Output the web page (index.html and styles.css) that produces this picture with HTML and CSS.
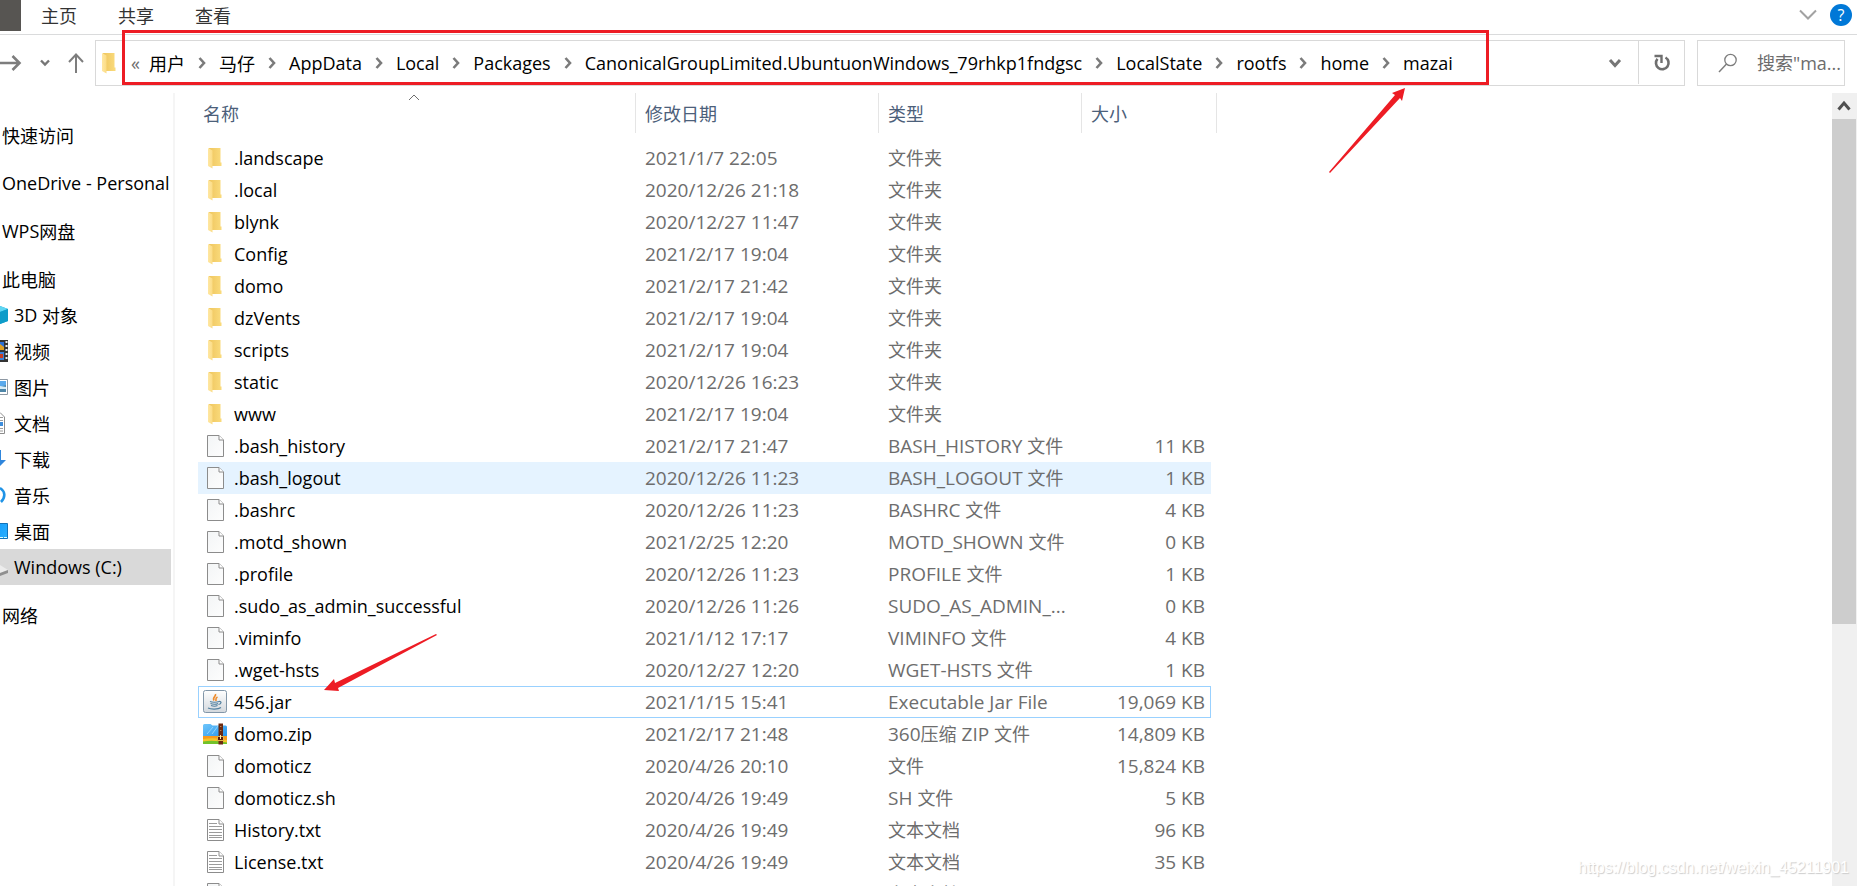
FILE: index.html
```html
<!DOCTYPE html>
<html lang="zh-CN">
<head>
<meta charset="utf-8">
<title>mazai</title>
<link rel="stylesheet" href="styles.css">
</head>
<body>
<svg class="sprite" aria-hidden="true">
  <defs>
    <linearGradient id="gFront" x1="0" y1="0" x2="1" y2="0"><stop offset="0" stop-color="#ffe7a2"/><stop offset="1" stop-color="#fbdc85"/></linearGradient>
    <linearGradient id="gBack" x1="0" y1="0" x2="1" y2="0"><stop offset="0" stop-color="#efc65f"/><stop offset="1" stop-color="#fadb7c"/></linearGradient>
    <linearGradient id="gPage" x1="0" y1="0" x2="1" y2="1"><stop offset="0" stop-color="#f3f5f6"/><stop offset="1" stop-color="#fdfdfd"/></linearGradient>
    <linearGradient id="gZip" x1="0" y1="0" x2="1" y2="1"><stop offset="0" stop-color="#6fc6fb"/><stop offset="1" stop-color="#2090ea"/></linearGradient>
    <linearGradient id="gJar" x1="0" y1="0" x2="0" y2="1"><stop offset="0" stop-color="#ffffff"/><stop offset="1" stop-color="#d3d8dd"/></linearGradient>
    <linearGradient id="gDesk" x1="0" y1="0" x2="1" y2="1"><stop offset="0" stop-color="#18a0fb"/><stop offset="1" stop-color="#2bb0ff"/></linearGradient>
  </defs>
  <symbol id="folder" viewBox="0 0 24 24">
    <path d="M6 2h11.500v14.500h1v3.500h-11z" fill="url(#gBack)"/>
    <path d="M5 2l4.500 2.500v18l-4.500-2.500z" fill="url(#gFront)"/>
  </symbol>
  <symbol id="file" viewBox="0 0 24 24">
    <path d="M4.500 1.500h11.500l4.500 4.500v16.500h-16z" fill="url(#gPage)" stroke="#8c8c8c"/>
    <path d="M16 1.500v4.500h4.500" fill="#fff" stroke="#8c8c8c"/>
  </symbol>
  <symbol id="text" viewBox="0 0 24 24">
    <path d="M4.500 1.500h11.500l4.500 4.500v16.500h-16z" fill="#fff" stroke="#8c8c8c"/>
    <path d="M16 1.500v4.500h4.500" fill="#fff" stroke="#8c8c8c"/>
    <path d="M6 5.500h8M6 8.500h13M6 11.500h13M6 14.500h13M6 17.500h13M6 19.500h13" stroke="#9b9b9b" fill="none"/>
  </symbol>
  <symbol id="jar" viewBox="0 0 24 24">
    <rect x=".5" y=".5" width="23" height="22" rx="2" fill="url(#gJar)" stroke="#8296a8"/>
    <path d="M12.500 4c1 2-3.500 3.500-1.500 6.500M14.500 7c-2.500 1.200-1.500 2.500-1.500 4" stroke="#ee8b2c" stroke-width="1.600" fill="none"/>
    <path d="M7 11.500c2 1 7 1 9 0M7.500 13.500c2 1 6 1 7.500 0M8 15.500c2 .8 5 .8 6.500 0M16 11.500c3-.5 2.500 2.500-.5 3M5 18c3 1.500 10 1.500 13-.5" stroke="#52809f" stroke-width="1.200" fill="none"/>
  </symbol>
  <symbol id="zip" viewBox="0 0 24 24">
    <path d="M0 3.500q0-1.500 1.500-1.500h6l2 1.500h13q1.500 0 1.500 1.500v12h-24z" fill="url(#gZip)"/>
    <path d="M4 12l6-7M9 12l6-8" stroke="#8dd4ff" stroke-width="1"/>
    <path d="M0 14h24v4h-24z" fill="#fa9a1c"/>
    <path d="M0 17q12-2 24 1v4h-24z" fill="#f7c52a"/>
    <path d="M0 19.500q10-2 24 1v1.500h-24z" fill="#72c22a"/>
    <path d="M15.500 1.500h4.500v21h-4.500z" fill="#6b2a10"/>
    <path d="M17.800 4v1M17.800 8v1" stroke="#d9a36e" stroke-width="1"/>
    <path d="M14.500 14.500h6v4h-6z" fill="#5a1d0a" stroke="#e2b64a"/>
    <path d="M17.500 13v4" stroke="#fff0b0"/>
  </symbol>
  <symbol id="crumb" viewBox="0 0 8 12"><path d="M1.500 1l4.500 5-4.500 5" fill="none" stroke="#7b7b7b" stroke-width="2.600"/></symbol>
  <symbol id="down" viewBox="0 0 14 10"><path d="M2 2l5 5.500 5-5.500" fill="none" stroke="#767676" stroke-width="3"/></symbol>
</svg>

<div class="window">
  <nav class="ribbon">
    <button class="file-tab" aria-label="文件"></button>
    <button class="tab">主页</button>
    <button class="tab">共享</button>
    <button class="tab">查看</button>
    <span class="spacer"></span>
    <button class="icon-btn" aria-label="展开功能区"><svg width="18" height="12" viewBox="0 0 18 12"><path d="M1 1.500l8 8 8-8" fill="none" stroke="#a2a2a2" stroke-width="2"/></svg></button>
    <button class="help" aria-label="帮助">?</button>
  </nav>

  <div class="toolbar">
    <div class="history">
      <button class="icon-btn" aria-label="前进"><svg width="22" height="18" viewBox="0 0 22 18"><path d="M0 9h20M12.500 2l7 7-7 7" fill="none" stroke="#7d7d7d" stroke-width="2.600"/></svg></button>
      <button class="icon-btn" aria-label="最近位置"><svg width="10" height="8" viewBox="0 0 10 8"><path d="M1 1.500l4 4 4-4" fill="none" stroke="#767676" stroke-width="2.400"/></svg></button>
      <button class="icon-btn" aria-label="向上"><svg width="16" height="20" viewBox="0 0 16 20"><path d="M8 20V2M1 9l7-7.500 7 7.500" fill="none" stroke="#7d7d7d" stroke-width="2"/></svg></button>
    </div>
    <div class="address">
      <svg class="icon"><use href="#folder"/></svg>
      <span class="overflow-mark">«</span>
      <ol class="crumbs">
        <li><a href="#" class="zh">用户</a></li>
        <li><svg class="sep"><use href="#crumb"/></svg><a href="#" class="zh">马仔</a></li>
        <li><svg class="sep"><use href="#crumb"/></svg><a href="#">AppData</a></li>
        <li><svg class="sep"><use href="#crumb"/></svg><a href="#">Local</a></li>
        <li><svg class="sep"><use href="#crumb"/></svg><a href="#">Packages</a></li>
        <li><svg class="sep"><use href="#crumb"/></svg><a href="#">CanonicalGroupLimited.UbuntuonWindows_79rhkp1fndgsc</a></li>
        <li><svg class="sep"><use href="#crumb"/></svg><a href="#">LocalState</a></li>
        <li><svg class="sep"><use href="#crumb"/></svg><a href="#">rootfs</a></li>
        <li><svg class="sep"><use href="#crumb"/></svg><a href="#">home</a></li>
        <li><svg class="sep"><use href="#crumb"/></svg><a href="#">mazai</a></li>
      </ol>
      <button class="addr-btn" aria-label="以前的位置"><svg width="14" height="10"><use href="#down"/></svg></button>
      <button class="addr-btn refresh" aria-label="刷新"><svg width="18" height="18" viewBox="0 0 18 18"><path d="M12.500 3.500a6.300 6.300 0 1 1-8 1.300" fill="none" stroke="#6f6f6f" stroke-width="2.600"/><path d="M1.500 2h7v7" fill="none" stroke="#6f6f6f" stroke-width="2.400"/></svg></button>
    </div>
    <label class="search">
      <svg width="20" height="20" viewBox="0 0 20 20"><circle cx="12.500" cy="7" r="5.700" fill="none" stroke="#7d7d7d" stroke-width="1.300"/><path d="M8.500 11l-7.500 8" stroke="#7d7d7d" stroke-width="1.500"/></svg>
      <input type="text" aria-label="搜索" placeholder="搜索&quot;ma...">
    </label>
  </div>

  <div class="main">
    <nav class="tree">
      <a class="root zh" href="#">快速访问</a>
      <a class="root" href="#">OneDrive - Personal</a>
      <a class="root" href="#">WPS<span class="zh">网盘</span></a>
      <a class="root zh" href="#">此电脑</a>
      <a class="node" href="#"><svg width="8" height="24" viewBox="0 0 8 24"><path d="M0 3l8 3v12l-8 3z" fill="#18a5d6"/><path d="M0 3l8 3-8 3z" fill="#5fd6f2"/><path d="M0 9l8-3v12l-8 3z" fill="#0e9cc9"/></svg>3D <span class="zh">对象</span></a>
      <a class="node zh" href="#"><svg width="8" height="24" viewBox="0 0 8 24"><path d="M0 1h8v22H0z" fill="#333"/><path d="M0 3h4v8H0z" fill="#2b6fd6"/><path d="M0 5l4 3v3H0z" fill="#e0a020"/><path d="M0 13h4v8H0z" fill="#3a7fd9"/><path d="M0 15h3v4H0z" fill="#c93c20"/><path d="M6.500 2v20" stroke="#eee" stroke-width="2" stroke-dasharray="2 2"/></svg>视频</a>
      <a class="node zh" href="#"><svg width="8" height="24" viewBox="0 0 8 24"><path d="M-1 4.500h8.500v15H-1z" fill="#fff" stroke="#8d98a3"/><path d="M0 6h6v7H0z" fill="#5aa9ec"/><path d="M0 12l6-2v7H0z" fill="#4e86a8"/><path d="M0 11l6 1v2H0z" fill="#d8ecf7"/></svg>图片</a>
      <a class="node zh" href="#"><svg width="8" height="24" viewBox="0 0 8 24"><path d="M-1 1.500h1l4.500 4.500v16.500H-1z" fill="#fff" stroke="#8c8c8c"/><path d="M0 6.500h3M0 9.500h3M0 17.500h3M0 20h3" stroke="#9b9b9b"/><path d="M0 11h3v4H0z" fill="#3c8ddc"/></svg>文档</a>
      <a class="node zh" href="#"><svg width="8" height="24" viewBox="0 0 8 24"><path d="M0 3h1v10h5l-6 6z" fill="#2f86dc"/></svg>下载</a>
      <a class="node zh" href="#"><svg width="8" height="24" viewBox="0 0 8 24"><path d="M0 5c5 3 6 9 1 14" fill="none" stroke="#1f93e6" stroke-width="2.600"/></svg>音乐</a>
      <a class="node zh" href="#"><svg width="8" height="24" viewBox="0 0 8 24"><path d="M-1 4.500h8.500v15H-1z" fill="url(#gDesk)" stroke="#1272b8"/><path d="M0 18.500h7" stroke="#dff" stroke-dasharray="3 1"/></svg>桌面</a>
      <a class="node selected" href="#"><svg width="8" height="24" viewBox="0 0 8 24"><path d="M0 10l8 5-8 3z" fill="#ececec"/><path d="M0 18l8-3v3l-8 3z" fill="#8f8f8f"/></svg>Windows (C:)</a>
      <a class="root zh" href="#">网络</a>
    </nav>

    <div class="files">
      <table>
        <colgroup><col class="c-name"><col class="c-date"><col class="c-type"><col class="c-size"></colgroup>
        <thead>
          <tr>
            <th class="first">名称<svg class="sort" width="12" height="7" viewBox="0 0 12 7"><path d="M1 6l5-5 5 5" fill="none" stroke="#6d6d6d"/></svg></th>
            <th>修改日期</th><th>类型</th><th class="last">大小</th>
          </tr>
        </thead>
        <tbody>
          <tr><td><svg class="icon"><use href="#folder"/></svg>.landscape</td><td>2021/1/7 22:05</td><td><span class="zh">文件夹</span></td><td></td></tr>
          <tr><td><svg class="icon"><use href="#folder"/></svg>.local</td><td>2020/12/26 21:18</td><td><span class="zh">文件夹</span></td><td></td></tr>
          <tr><td><svg class="icon"><use href="#folder"/></svg>blynk</td><td>2020/12/27 11:47</td><td><span class="zh">文件夹</span></td><td></td></tr>
          <tr><td><svg class="icon"><use href="#folder"/></svg>Config</td><td>2021/2/17 19:04</td><td><span class="zh">文件夹</span></td><td></td></tr>
          <tr><td><svg class="icon"><use href="#folder"/></svg>domo</td><td>2021/2/17 21:42</td><td><span class="zh">文件夹</span></td><td></td></tr>
          <tr><td><svg class="icon"><use href="#folder"/></svg>dzVents</td><td>2021/2/17 19:04</td><td><span class="zh">文件夹</span></td><td></td></tr>
          <tr><td><svg class="icon"><use href="#folder"/></svg>scripts</td><td>2021/2/17 19:04</td><td><span class="zh">文件夹</span></td><td></td></tr>
          <tr><td><svg class="icon"><use href="#folder"/></svg>static</td><td>2020/12/26 16:23</td><td><span class="zh">文件夹</span></td><td></td></tr>
          <tr><td><svg class="icon"><use href="#folder"/></svg>www</td><td>2021/2/17 19:04</td><td><span class="zh">文件夹</span></td><td></td></tr>
          <tr><td><svg class="icon"><use href="#file"/></svg>.bash_history</td><td>2021/2/17 21:47</td><td>BASH_HISTORY <span class="zh">文件</span></td><td>11 KB</td></tr>
          <tr class="hover"><td><svg class="icon"><use href="#file"/></svg>.bash_logout</td><td>2020/12/26 11:23</td><td>BASH_LOGOUT <span class="zh">文件</span></td><td>1 KB</td></tr>
          <tr><td><svg class="icon"><use href="#file"/></svg>.bashrc</td><td>2020/12/26 11:23</td><td>BASHRC <span class="zh">文件</span></td><td>4 KB</td></tr>
          <tr><td><svg class="icon"><use href="#file"/></svg>.motd_shown</td><td>2021/2/25 12:20</td><td>MOTD_SHOWN <span class="zh">文件</span></td><td>0 KB</td></tr>
          <tr><td><svg class="icon"><use href="#file"/></svg>.profile</td><td>2020/12/26 11:23</td><td>PROFILE <span class="zh">文件</span></td><td>1 KB</td></tr>
          <tr><td><svg class="icon"><use href="#file"/></svg>.sudo_as_admin_successful</td><td>2020/12/26 11:26</td><td>SUDO_AS_ADMIN_...</td><td>0 KB</td></tr>
          <tr><td><svg class="icon"><use href="#file"/></svg>.viminfo</td><td>2021/1/12 17:17</td><td>VIMINFO <span class="zh">文件</span></td><td>4 KB</td></tr>
          <tr><td><svg class="icon"><use href="#file"/></svg>.wget-hsts</td><td>2020/12/27 12:20</td><td>WGET-HSTS <span class="zh">文件</span></td><td>1 KB</td></tr>
          <tr class="focused"><td><svg class="icon"><use href="#jar"/></svg>456.jar</td><td>2021/1/15 15:41</td><td>Executable Jar File</td><td>19,069 KB</td></tr>
          <tr><td><svg class="icon"><use href="#zip"/></svg>domo.zip</td><td>2021/2/17 21:48</td><td>360<span class="zh">压缩</span> ZIP <span class="zh">文件</span></td><td>14,809 KB</td></tr>
          <tr><td><svg class="icon"><use href="#file"/></svg>domoticz</td><td>2020/4/26 20:10</td><td><span class="zh">文件</span></td><td>15,824 KB</td></tr>
          <tr><td><svg class="icon"><use href="#file"/></svg>domoticz.sh</td><td>2020/4/26 19:49</td><td>SH <span class="zh">文件</span></td><td>5 KB</td></tr>
          <tr><td><svg class="icon"><use href="#text"/></svg>History.txt</td><td>2020/4/26 19:49</td><td><span class="zh">文本文档</span></td><td>96 KB</td></tr>
          <tr><td><svg class="icon"><use href="#text"/></svg>License.txt</td><td>2020/4/26 19:49</td><td><span class="zh">文本文档</span></td><td>35 KB</td></tr>
          <tr><td><svg class="icon"><use href="#file"/></svg></td><td></td><td><span class="zh">文本文档</span></td><td></td></tr>
        </tbody>
      </table>
    </div>

    <div class="scrollbar">
      <button class="scroll-up" aria-label="向上滚动"><svg width="14" height="12" viewBox="0 0 14 12"><path d="M1.500 9.500l5.500-6.500 5.500 6.500" fill="none" stroke="#505050" stroke-width="3"/></svg></button>
      <div class="thumb"></div>
    </div>
  </div>

  <div class="frame"></div>
  <svg class="arrow arrow-path" viewBox="0 0 80 88"><path d="M77 1l-3 13-2-3L2 86l-1-1L67 8l-3-2z" fill="#ed1c24"/></svg>
  <svg class="arrow arrow-jar" viewBox="0 0 116 60"><path d="M1 57l10-11 1 4L113 1l1 1L15 55l1 3z" fill="#ed1c24"/></svg>
  <div class="watermark">https://blog.csdn.net/weixin_45211901</div>
</div>
</body>
</html>
```

FILE: styles.css
```css
* { box-sizing: border-box; }

body {
  margin: 0;
  background: #fff;
  color: #000;
  font-family: "Open Sans", "Noto Sans CJK SC", sans-serif;
  font-size: 18px;
  line-height: 24px;
}

a { color: inherit; text-decoration: none; }

button {
  padding: 0;
  border: 0;
  background: none;
  font: inherit;
  color: inherit;
}

svg { display: block; flex: none; }

.sprite { position: absolute; width: 0; height: 0; }

.zh { font-family: "Noto Sans CJK SC", sans-serif; font-size: 18px; line-height: 22px; }

.window {
  position: relative;
  display: flex;
  flex-direction: column;
  height: 100vh;
  overflow: hidden;
}

/* Ribbon tabs */
.ribbon {
  display: flex;
  align-items: center;
  gap: 41px;
  height: 35px;
  padding: 0 5px 5px 0;
  border-bottom: 1px solid #dadbdc;
}
.file-tab { align-self: flex-start; width: 21px; height: 31px; background: #575552; margin-right: -21px; }
.tab {
  font-family: "Noto Sans CJK SC", sans-serif;
  font-size: 18px;
  color: #333;
}
.spacer { flex: 1; }
.ribbon .icon-btn { margin-right: -28px; }
.help {
  width: 22px;
  height: 22px;
  border-radius: 50%;
  background: #0078d7;
  color: #fff;
  font-size: 16px;
  line-height: 22px;
}

/* Navigation row */
.toolbar {
  display: flex;
  align-items: stretch;
  gap: 12px;
  height: 51px;
  padding: 5px 12px 0 0;
}
.history {
  display: flex;
  align-items: center;
  justify-content: space-between;
  width: 84px;
  margin-right: -1px;
}
.address {
  display: flex;
  flex: 1;
  align-items: center;
  min-width: 0;
  padding-bottom: 1px;
  border: 1px solid #d9d9d9;
}
.icon { width: 24px; height: 24px; }
.address .icon { margin-left: 1px; }
.overflow-mark { width: 18px; margin-left: 10px; color: #6d6d6d; }
.crumbs {
  display: flex;
  flex: 1;
  min-width: 0;
  margin: 0;
  padding: 0;
  gap: 13px;
  list-style: none;
}
.crumbs li { display: flex; align-items: center; gap: 13px; }
.sep { width: 8px; height: 12px; }
.addr-btn {
  display: grid;
  place-items: center;
  align-self: stretch;
  width: 46px;
}
.refresh { border-left: 1px solid #d9d9d9; }
.search {
  display: flex;
  align-items: center;
  gap: 19px;
  width: 148px;
  padding-left: 20px;
  border: 1px solid #d9d9d9;
}
.search input {
  flex: 1;
  min-width: 0;
  padding: 0;
  border: 0;
  outline: 0;
  font: inherit;
}
.search input::placeholder { color: #6d6d6d; opacity: 1; }

/* Body */
.main { display: flex; flex: 1; min-height: 0; padding-top: 7px; }
.tree {
  display: flex;
  flex-direction: column;
  width: 175px;
  padding: 12px 2px 0 0;
  border-right: 2px solid #f5f5f5;
}
.tree a {
  display: flex;
  flex: none;
  align-items: center;
  height: 36px;
  padding-bottom: 1px;
  overflow: hidden;
  white-space: pre;
}
.tree .root { margin-top: 12px; padding-left: 2px; }
.tree .node svg { margin-right: 6px; }
.tree .selected { background: #d9d9d9; }

.files { flex: 1; min-width: 0; overflow: hidden; padding-left: 23px; }
table {
  width: 1013px;
  table-layout: fixed;
  border-collapse: collapse;
}
.c-name { width: 437px; }
.c-date { width: 243px; }
.c-type { width: 203px; }
.c-size { width: 130px; }
th {
  position: relative;
  height: 49px;
  padding: 0 0 10px 10px;
  text-align: left;
  font-family: "Noto Sans CJK SC", sans-serif;
  font-size: 18px;
  font-weight: 400;
  color: #4c607a;
}
th.first { padding-left: 5px; }
th::after {
  content: "";
  position: absolute;
  top: 0;
  right: -1px;
  width: 1px;
  height: 40px;
  background: #e5e5e5;
}
th.last::after { right: -6px; }
.sort { position: absolute; top: 1px; left: 210px; }
td {
  height: 32px;
  padding: 0 0 0 10px;
  color: #6d6d6d;
  font-size: 19px;
  white-space: nowrap;
}
td:first-child {
  display: flex;
  align-items: center;
  gap: 7px;
  padding-left: 5px;
  color: #000;
  font-size: 18px;
}
td:last-child { padding-right: 6px; text-align: right; }
.hover { background: #e5f3ff; }
.focused { outline: 1px solid #99d1ff; outline-offset: -1px; }

.scrollbar { width: 25px; padding-right: 1px; background: #f0f0f0; }
.scroll-up { display: grid; place-items: center; width: 24px; height: 26px; }
.thumb { height: 505px; background: #cdcdcd; }

/* Annotations laid over the window */
.frame {
  position: absolute;
  top: 30px;
  left: 122px;
  width: 1367px;
  height: 55px;
  border: 3px solid #ed1c24;
}
.arrow { position: absolute; }
.arrow-path { top: 87px; left: 1328px; width: 80px; height: 88px; }
.arrow-jar { top: 633px; left: 323px; width: 116px; height: 60px; }
.watermark {
  position: absolute;
  right: 8px;
  bottom: 6px;
  font-family: "Liberation Sans", Arial, sans-serif;
  font-size: 16px;
  color: #fff;
  text-shadow: 1px 1px 1px #ccc;
}
```
